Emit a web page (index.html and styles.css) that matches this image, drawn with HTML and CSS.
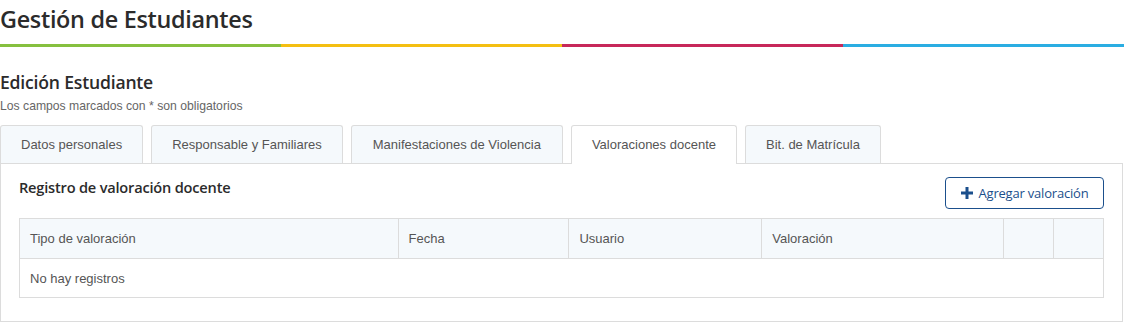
FILE: index.html
```html
<!DOCTYPE html>
<html>
<head>
	<meta charset="UTF-8">
	<title>Gestión de Estudiantes</title>
	<link rel="stylesheet" href="styles.css">
</head>
<body>
	<header class="page-header">
		<h1>Gestión de Estudiantes</h1>
		<div class="color-bar">
			<span class="green"></span>
			<span class="yellow"></span>
			<span class="red"></span>
			<span class="blue"></span>
		</div>
	</header>

	<main>
		<h2 class="form-title">Edición Estudiante</h2>
		<p class="form-hint">Los campos marcados con * son obligatorios</p>

		<ul class="tabs">
			<li class="tab">Datos personales</li>
			<li class="tab">Responsable y Familiares</li>
			<li class="tab wide">Manifestaciones de Violencia</li>
			<li class="tab active">Valoraciones docente</li>
			<li class="tab">Bit. de Matrícula</li>
		</ul>

		<section class="panel">
			<div class="panel-head">
				<h3>Registro de valoración docente</h3>
				<button class="btn-outline">
					<svg width="12" height="12" viewBox="0 0 12 12"><path d="M4.5 0h3v4.5H12v3H7.5V12h-3V7.5H0v-3h4.5z" fill="#1b4f8c"/></svg>
					Agregar valoración
				</button>
			</div>

			<table class="grid">
				<thead>
					<tr>
						<th class="col-tipo">Tipo de valoración</th>
						<th class="col-fecha">Fecha</th>
						<th class="col-usuario">Usuario</th>
						<th class="col-valor">Valoración</th>
						<th class="col-act"></th>
						<th class="col-act"></th>
					</tr>
				</thead>
				<tbody>
					<tr>
						<td colspan="6">No hay registros</td>
					</tr>
				</tbody>
			</table>
		</section>
	</main>
</body>
</html>
```

FILE: styles.css
```css
body {
	margin: 0;
	padding: 0;
	font-family: "Liberation Sans", Arial, sans-serif;
	font-size: 13px;
	color: #555;
	background-color: #fff;
}

.page-header h1 {
	margin: 0;
	padding: 2px 0 0 0;
	height: 42px;
	font-family: "Open Sans", sans-serif;
	font-weight: 600;
	font-size: 23.4px;
	line-height: 34px;
	color: #2b2b2b;
	letter-spacing: -0.3px;
}

.color-bar {
	display: flex;
	height: 3px;
}

.color-bar span {
	flex: 1;
}

.color-bar .green { background-color: #86c03f; }
.color-bar .yellow { background-color: #f4bf12; }
.color-bar .red { background-color: #c7285a; }
.color-bar .blue { background-color: #2aade2; }

main {
	padding: 0;
}

.form-title {
	margin: 22px 0 0 0;
	font-family: "Open Sans", sans-serif;
	font-weight: 600;
	font-size: 17.6px;
	line-height: 26px;
	color: #2b2b2b;
	letter-spacing: -0.2px;
}

.form-hint {
	margin: 4px 0 0 0;
	font-size: 12.2px;
	line-height: 15px;
	color: #666;
}

.tabs {
	list-style: none;
	margin: 11px 0 0 0;
	padding: 0;
	display: flex;
	gap: 8px;
	position: relative;
	z-index: 1;
}

.tab {
	height: 37px;
	line-height: 37px;
	padding: 0 20px;
	border: 1px solid #dcdcdc;
	border-bottom: none;
	border-radius: 3px 3px 0 0;
	background-color: #f5f9fc;
	color: #555;
	font-size: 13px;
	white-space: nowrap;
}

.tab.wide {
	padding: 0 21px;
}

.tab.active {
	background-color: #fff;
	height: 38px;
	margin-bottom: -1px;
}

.panel {
	border: 1px solid #dcdcdc;
	padding: 0 18px 23px 18px;
	margin-right: 1px;
}

.panel-head {
	display: flex;
	justify-content: space-between;
	align-items: flex-start;
	padding-top: 13px;
	height: 41px;
}

.panel-head h3 {
	margin: 0;
	font-family: "Open Sans", sans-serif;
	font-weight: 600;
	font-size: 14.6px;
	line-height: 20px;
	color: #2b2b2b;
	letter-spacing: -0.2px;
}

.btn-outline {
	margin-top: 0;
	height: 32px;
	width: 159px;
	border: 1px solid #1b4f8c;
	border-radius: 4px;
	background-color: #fff;
	color: #1b4f8c;
	font-family: "Open Sans", sans-serif;
	font-size: 13px;
	letter-spacing: -0.2px;
	display: flex;
	align-items: center;
	justify-content: center;
	gap: 6px;
	padding: 0;
}

.grid {
	width: 100%;
	border-collapse: collapse;
	border: 1px solid #dcdcdc;
	margin-top: 0;
}

.grid th {
	background-color: #f5f9fc;
	font-weight: normal;
	text-align: left;
	color: #555;
	height: 39px;
	padding: 0 10px;
	border: 1px solid #dcdcdc;
}

.grid td {
	height: 38px;
	padding: 0 10px;
	color: #555;
}

.col-tipo { width: 358px; }
.col-fecha { width: 150px; }
.col-usuario { width: 172px; }
.col-valor { width: 221px; }
.col-act { width: 29px; }
```
